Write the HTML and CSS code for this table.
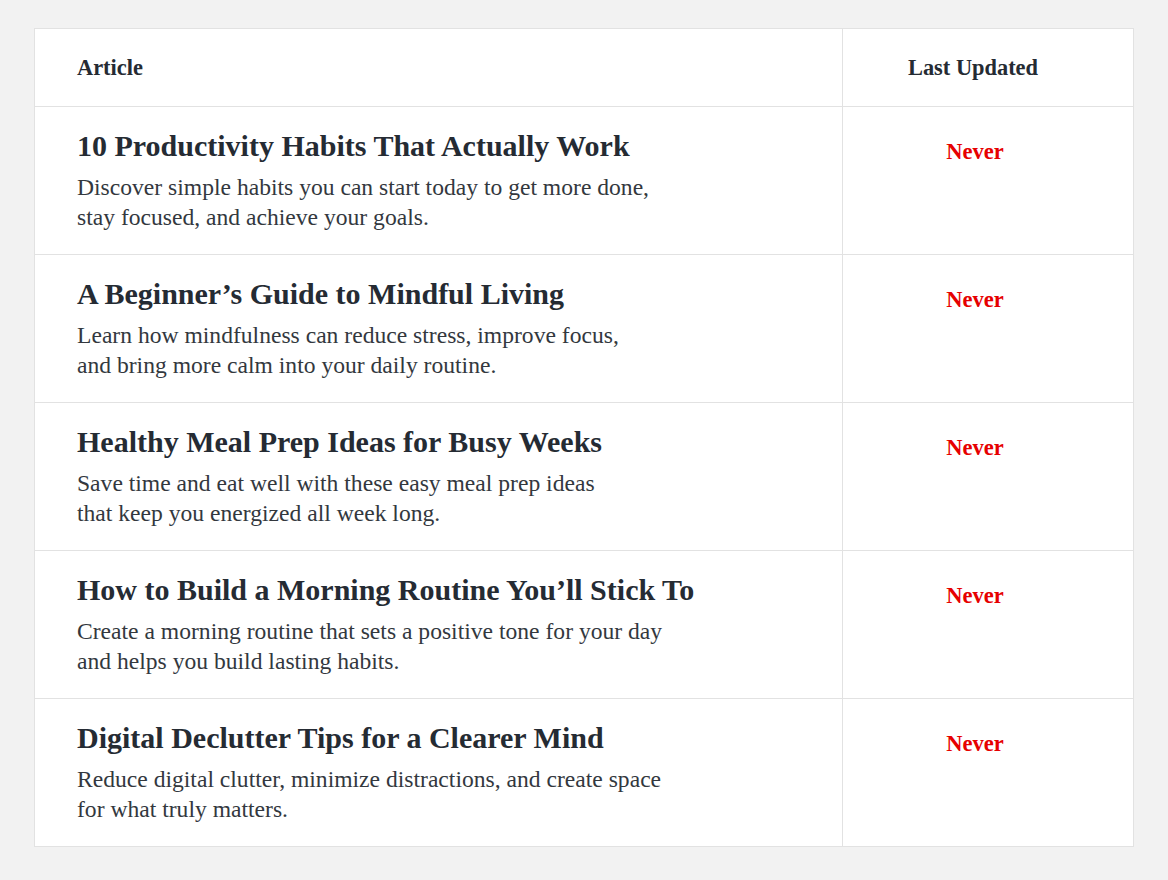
FILE: index.html
```html
<!DOCTYPE html>
<html lang="en">
<head>
    <meta charset="UTF-8">
    <meta name="viewport" content="width=device-width, initial-scale=1.0">
    <title>Articles</title>
    <link rel="stylesheet" href="styles.css">
</head>
<body>

<table class="articles">
    <thead>
        <tr>
            <th class="col-article">Article</th>
            <th class="col-updated">Last Updated</th>
        </tr>
    </thead>
    <tbody>
        <tr>
            <td class="article">
                <h2>10 Productivity Habits That Actually Work</h2>
                <p>Discover simple habits you can start today to get more done,<br>stay focused, and achieve your goals.</p>
            </td>
            <td class="updated"><span class="never">Never</span></td>
        </tr>
        <tr>
            <td class="article">
                <h2>A Beginner’s Guide to Mindful Living</h2>
                <p>Learn how mindfulness can reduce stress, improve focus,<br>and bring more calm into your daily routine.</p>
            </td>
            <td class="updated"><span class="never">Never</span></td>
        </tr>
        <tr>
            <td class="article">
                <h2>Healthy Meal Prep Ideas for Busy Weeks</h2>
                <p>Save time and eat well with these easy meal prep ideas<br>that keep you energized all week long.</p>
            </td>
            <td class="updated"><span class="never">Never</span></td>
        </tr>
        <tr>
            <td class="article">
                <h2>How to Build a Morning Routine You’ll Stick To</h2>
                <p>Create a morning routine that sets a positive tone for your day<br>and helps you build lasting habits.</p>
            </td>
            <td class="updated"><span class="never">Never</span></td>
        </tr>
        <tr>
            <td class="article">
                <h2>Digital Declutter Tips for a Clearer Mind</h2>
                <p>Reduce digital clutter, minimize distractions, and create space<br>for what truly matters.</p>
            </td>
            <td class="updated"><span class="never">Never</span></td>
        </tr>
    </tbody>
</table>

</body>
</html>
```

FILE: styles.css
```css
body {
    margin: 0;
    padding: 28px 34px;
    background-color: #f2f2f2;
    font-family: "Liberation Serif", "DejaVu Serif", serif;
    color: #252b33;
}
.articles {
    width: 1100px;
    border-collapse: collapse;
    background: #fff;
    border: 1px solid #e0e0e0;
}
.articles th,
.articles td {
    border: 1px solid #e2e2e2;
    vertical-align: top;
}
.articles th {
    height: 76px;
    vertical-align: middle;
    font-size: 22.4px;
    font-weight: bold;
}
.col-article {
    text-align: left;
    padding: 1px 42px 0;
}
.col-updated {
    width: 232px;
    text-align: center;
    padding: 1px 44px 0 14px;
}
.article {
    height: 148px;
    box-sizing: border-box;
    padding: 21px 42px 0;
}
.article h2 {
    margin: 0 0 8px;
    font-size: 30px;
    line-height: 36px;
    font-weight: bold;
}
.article p {
    margin: 0;
    font-size: 23.6px;
    line-height: 30px;
    color: #33383e;
}
.updated {
    text-align: center;
    padding: 32px 42px 0 16px;
}
.never {
    color: #e60000;
    font-weight: bold;
    font-size: 22.5px;
}
```
